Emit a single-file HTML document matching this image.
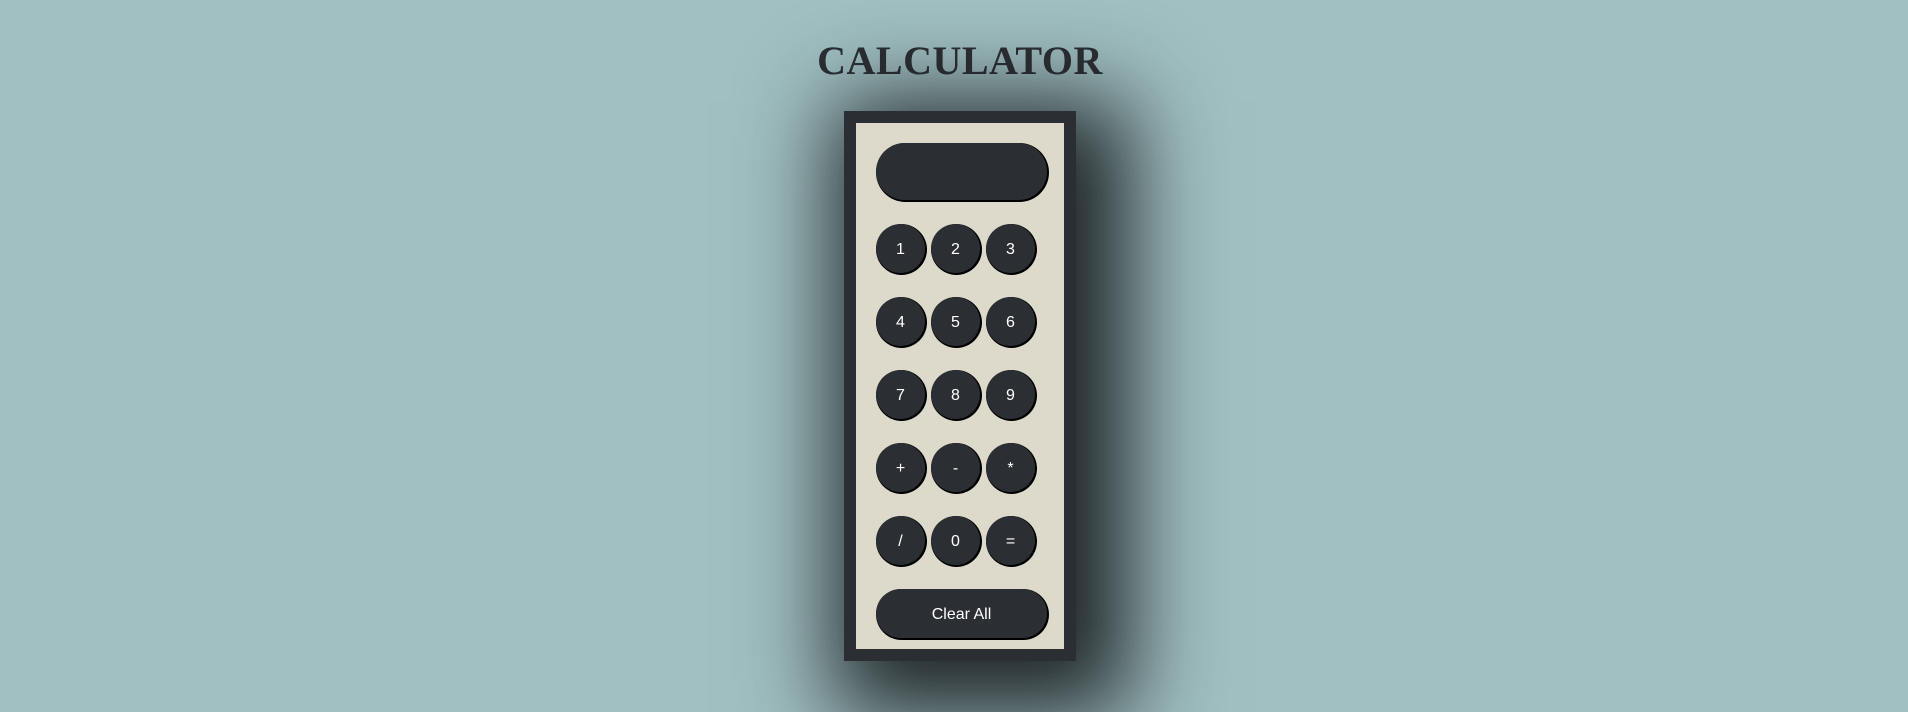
<!DOCTYPE html>
<html><head><style>
body{margin:0;width:1908px;height:712px;background:#a1c0c2;overflow:hidden;position:relative;font-family:"Liberation Sans",sans-serif}
h1{position:absolute;left:0;width:1920px;top:37px;margin:0;text-align:center;font-family:"Liberation Serif",serif;font-weight:bold;font-size:40px;color:#2b2f33;letter-spacing:0.5px}
.box{position:absolute;left:844px;top:111px;width:208px;height:526px;border:12px solid #2b2f33;background:#dedacb;box-shadow:22px 22px 85px 32px rgba(25,29,33,0.95)}
.b{position:absolute;background:#2b2f33;color:#fff;border-radius:50%;width:49px;height:49px;box-shadow:1px 1px 0 1px #000;text-align:center;line-height:51px;font-size:16px}
.w{width:171px;border-radius:26px}
</style></head><body>
<h1>CALCULATOR</h1>
<div class="box"></div>
<div class="b w" style="left:876px;top:143px;height:57px;border-radius:29px"></div>
<div class="b" style="left:876px;top:224px">1</div>
<div class="b" style="left:931px;top:224px">2</div>
<div class="b" style="left:986px;top:224px">3</div>
<div class="b" style="left:876px;top:297px">4</div>
<div class="b" style="left:931px;top:297px">5</div>
<div class="b" style="left:986px;top:297px">6</div>
<div class="b" style="left:876px;top:370px">7</div>
<div class="b" style="left:931px;top:370px">8</div>
<div class="b" style="left:986px;top:370px">9</div>
<div class="b" style="left:876px;top:443px">+</div>
<div class="b" style="left:931px;top:443px">-</div>
<div class="b" style="left:986px;top:443px">*</div>
<div class="b" style="left:876px;top:516px">/</div>
<div class="b" style="left:931px;top:516px">0</div>
<div class="b" style="left:986px;top:516px">=</div>
<div class="b w" style="left:876px;top:589px">Clear All</div>
</body></html>
